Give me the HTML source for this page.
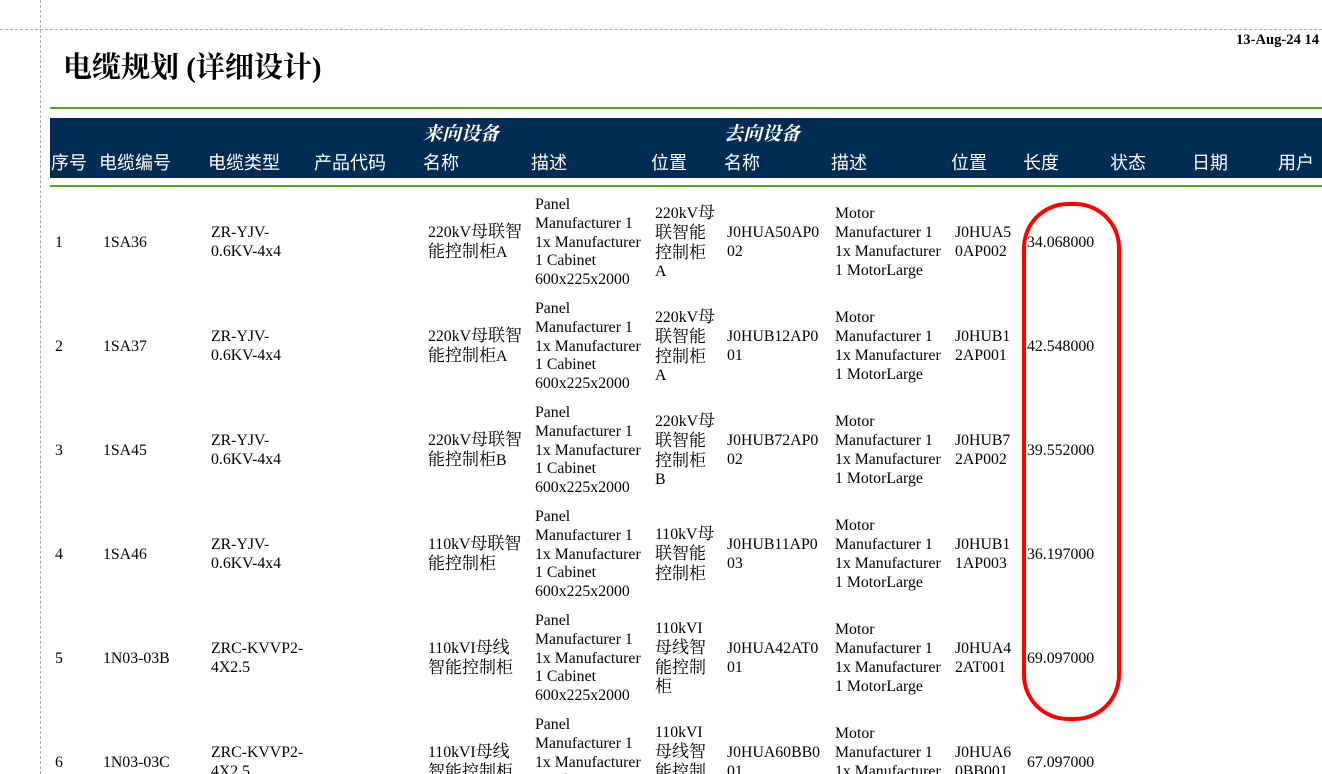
<!DOCTYPE html>
<html style="height:774px;overflow:hidden"><head><meta charset="utf-8"><style>
body{margin:0;width:1322px;height:774px;overflow:hidden;background:#fff;position:relative;font-family:"Liberation Serif","Noto Serif CJK SC",serif;color:#000}
.a{position:absolute}
.c{position:absolute;height:104px;display:flex;align-items:center;font-size:15.8px;line-height:18.8px;white-space:nowrap}
.c>i{display:block;font-style:normal}
.c b{font-weight:normal;font-size:17px}
.h{position:absolute;color:#fff;font-family:"Liberation Sans","Noto Sans CJK SC",sans-serif;font-size:18px;font-weight:normal;top:149px}
.g{position:absolute;color:#fff;font-family:"Liberation Serif","Noto Serif CJK SC",serif;font-size:19px;font-style:italic;font-weight:bold;top:119px}
</style></head><body>
<div class="a" style="left:40px;top:0;height:774px;border-left:1px dashed #aaa"></div>
<div class="a" style="left:0;top:29px;width:1322px;border-top:1px dashed #aaa"></div>
<div class="a" style="left:63px;top:45px;font-size:29px;font-weight:bold;white-space:nowrap;font-family:'Liberation Serif','Noto Serif CJK SC',serif">电缆规划 (详细设计)</div>
<div class="a" style="left:1236px;top:32px;font-size:14.6px;font-weight:bold;white-space:nowrap">13-Aug-24 14</div>
<div class="a" style="left:50px;top:107px;width:1272px;height:2px;background:#5aa428"></div>
<div class="a" style="left:50px;top:118px;width:1272px;height:60px;background:#002b52"></div>
<div class="a" style="left:50px;top:185px;width:1272px;height:2px;background:#5aa428"></div>
<div class="g" style="left:423px">来向设备</div>
<div class="g" style="left:724px">去向设备</div>
<div class="h" style="left:51px">序号</div>
<div class="h" style="left:99px">电缆编号</div>
<div class="h" style="left:208px">电缆类型</div>
<div class="h" style="left:314px">产品代码</div>
<div class="h" style="left:423px">名称</div>
<div class="h" style="left:531px">描述</div>
<div class="h" style="left:651px">位置</div>
<div class="h" style="left:724px">名称</div>
<div class="h" style="left:831px">描述</div>
<div class="h" style="left:951px">位置</div>
<div class="h" style="left:1023px">长度</div>
<div class="h" style="left:1110px">状态</div>
<div class="h" style="left:1192px">日期</div>
<div class="h" style="left:1278px">用户</div>

<div class="c" style="top:191px;left:55px"><i>1</i></div><div class="c" style="top:191px;left:103px"><i>1SA36</i></div><div class="c" style="top:191px;left:211px"><i>ZR-YJV-<br>0.6KV-4x4</i></div><div class="c" style="top:191px;left:428px"><i>220kV<b>母联智</b><br><b>能控制柜</b>A</i></div><div class="c" style="top:191px;left:535px"><i>Panel<br>Manufacturer 1<br>1x Manufacturer<br>1 Cabinet<br>600x225x2000</i></div><div class="c" style="top:191px;left:655px"><i>220kV<b>母</b><br><b>联智能</b><br><b>控制柜</b><br>A</i></div><div class="c" style="top:191px;left:727px"><i>J0HUA50AP0<br>02</i></div><div class="c" style="top:191px;left:835px"><i>Motor<br>Manufacturer 1<br>1x Manufacturer<br>1 MotorLarge</i></div><div class="c" style="top:191px;left:955px"><i>J0HUA5<br>0AP002</i></div><div class="c" style="top:191px;left:1027px"><i>34.068000</i></div>

<div class="c" style="top:295px;left:55px"><i>2</i></div><div class="c" style="top:295px;left:103px"><i>1SA37</i></div><div class="c" style="top:295px;left:211px"><i>ZR-YJV-<br>0.6KV-4x4</i></div><div class="c" style="top:295px;left:428px"><i>220kV<b>母联智</b><br><b>能控制柜</b>A</i></div><div class="c" style="top:295px;left:535px"><i>Panel<br>Manufacturer 1<br>1x Manufacturer<br>1 Cabinet<br>600x225x2000</i></div><div class="c" style="top:295px;left:655px"><i>220kV<b>母</b><br><b>联智能</b><br><b>控制柜</b><br>A</i></div><div class="c" style="top:295px;left:727px"><i>J0HUB12AP0<br>01</i></div><div class="c" style="top:295px;left:835px"><i>Motor<br>Manufacturer 1<br>1x Manufacturer<br>1 MotorLarge</i></div><div class="c" style="top:295px;left:955px"><i>J0HUB1<br>2AP001</i></div><div class="c" style="top:295px;left:1027px"><i>42.548000</i></div>

<div class="c" style="top:399px;left:55px"><i>3</i></div><div class="c" style="top:399px;left:103px"><i>1SA45</i></div><div class="c" style="top:399px;left:211px"><i>ZR-YJV-<br>0.6KV-4x4</i></div><div class="c" style="top:399px;left:428px"><i>220kV<b>母联智</b><br><b>能控制柜</b>B</i></div><div class="c" style="top:399px;left:535px"><i>Panel<br>Manufacturer 1<br>1x Manufacturer<br>1 Cabinet<br>600x225x2000</i></div><div class="c" style="top:399px;left:655px"><i>220kV<b>母</b><br><b>联智能</b><br><b>控制柜</b><br>B</i></div><div class="c" style="top:399px;left:727px"><i>J0HUB72AP0<br>02</i></div><div class="c" style="top:399px;left:835px"><i>Motor<br>Manufacturer 1<br>1x Manufacturer<br>1 MotorLarge</i></div><div class="c" style="top:399px;left:955px"><i>J0HUB7<br>2AP002</i></div><div class="c" style="top:399px;left:1027px"><i>39.552000</i></div>

<div class="c" style="top:503px;left:55px"><i>4</i></div><div class="c" style="top:503px;left:103px"><i>1SA46</i></div><div class="c" style="top:503px;left:211px"><i>ZR-YJV-<br>0.6KV-4x4</i></div><div class="c" style="top:503px;left:428px"><i>110kV<b>母联智</b><br><b>能控制柜</b></i></div><div class="c" style="top:503px;left:535px"><i>Panel<br>Manufacturer 1<br>1x Manufacturer<br>1 Cabinet<br>600x225x2000</i></div><div class="c" style="top:503px;left:655px"><i>110kV<b>母</b><br><b>联智能</b><br><b>控制柜</b></i></div><div class="c" style="top:503px;left:727px"><i>J0HUB11AP0<br>03</i></div><div class="c" style="top:503px;left:835px"><i>Motor<br>Manufacturer 1<br>1x Manufacturer<br>1 MotorLarge</i></div><div class="c" style="top:503px;left:955px"><i>J0HUB1<br>1AP003</i></div><div class="c" style="top:503px;left:1027px"><i>36.197000</i></div>

<div class="c" style="top:607px;left:55px"><i>5</i></div><div class="c" style="top:607px;left:103px"><i>1N03-03B</i></div><div class="c" style="top:607px;left:211px"><i>ZRC-KVVP2-<br>4X2.5</i></div><div class="c" style="top:607px;left:428px"><i>110kVI<b>母线</b><br><b>智能控制柜</b></i></div><div class="c" style="top:607px;left:535px"><i>Panel<br>Manufacturer 1<br>1x Manufacturer<br>1 Cabinet<br>600x225x2000</i></div><div class="c" style="top:607px;left:655px"><i>110kVI<br><b>母线智</b><br><b>能控制</b><br><b>柜</b></i></div><div class="c" style="top:607px;left:727px"><i>J0HUA42AT0<br>01</i></div><div class="c" style="top:607px;left:835px"><i>Motor<br>Manufacturer 1<br>1x Manufacturer<br>1 MotorLarge</i></div><div class="c" style="top:607px;left:955px"><i>J0HUA4<br>2AT001</i></div><div class="c" style="top:607px;left:1027px"><i>69.097000</i></div>

<div class="c" style="top:711px;left:55px"><i>6</i></div><div class="c" style="top:711px;left:103px"><i>1N03-03C</i></div><div class="c" style="top:711px;left:211px"><i>ZRC-KVVP2-<br>4X2.5</i></div><div class="c" style="top:711px;left:428px"><i>110kVI<b>母线</b><br><b>智能控制柜</b></i></div><div class="c" style="top:711px;left:535px"><i>Panel<br>Manufacturer 1<br>1x Manufacturer<br>1 Cabinet<br>600x225x2000</i></div><div class="c" style="top:711px;left:655px"><i>110kVI<br><b>母线智</b><br><b>能控制</b><br><b>柜</b></i></div><div class="c" style="top:711px;left:727px"><i>J0HUA60BB0<br>01</i></div><div class="c" style="top:711px;left:835px"><i>Motor<br>Manufacturer 1<br>1x Manufacturer<br>1 MotorLarge</i></div><div class="c" style="top:711px;left:955px"><i>J0HUA6<br>0BB001</i></div><div class="c" style="top:711px;left:1027px"><i>67.097000</i></div>

<div class="a" style="left:1022px;top:202px;width:91px;height:511px;border:4px solid #f00;border-radius:46px"></div>
</body></html>
